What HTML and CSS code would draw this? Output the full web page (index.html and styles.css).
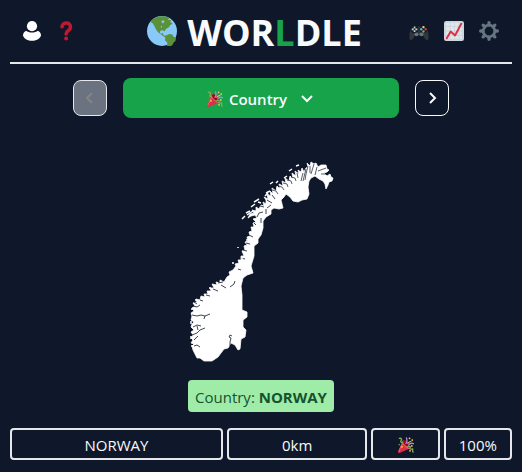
FILE: index.html
```
<!DOCTYPE html>
<html lang="en">
<head>
<meta charset="utf-8">
<meta name="viewport" content="width=device-width, initial-scale=1">
<title>Worldle</title>
<link rel="stylesheet" href="styles.css">
</head>
<body>
<svg class="defs" aria-hidden="true">
  <symbol id="party" viewBox="0 0 36 36">
    <path fill="#dd2e44" d="M11.6 7.6c-.2.2-.3.4-.4.6L.1 33.200c-.4 1 0 1.900.7 2.500.6.6 1.500.7 2.500.3L27.900 25.400c1.500-2.500-.6-7.500-5.200-12.200S13.300 6 11.600 7.600z"/>
    <path fill="#ea596e" d="M13 12 3 33l-2.500-1L11 9zM11 8c2 7 9 15 17 17l-5 2C15 23 10 16 9 12z"/>
    <ellipse cx="20" cy="16" rx="11" ry="4.500" fill="#a0041e" transform="rotate(45 20 16)"/>
    <path fill="none" stroke="#aa8dd8" stroke-width="3" stroke-linecap="round" d="M18 14c4-4 2-8 1-12M24 18c2-3 6-5 11-3"/>
    <path fill="none" stroke="#77b255" stroke-width="3" stroke-linecap="round" d="M3 3c5-1 6 2 4 5s0 4 3 4M21 22c4-2 8-1 6 2s2 4 5 3-1 5 2 7"/>
    <path fill="none" stroke="#fdcb58" stroke-width="2.500" stroke-linecap="round" d="M22 14c2-2 3-4 7-4"/>
    <g fill="#fdcb58"><circle cx="26" cy="3" r="2"/><circle cx="32" cy="7" r="2"/><circle cx="31" cy="20" r="2"/><circle cx="9" cy="22" r="2"/><circle cx="27" cy="31" r="2"/></g>
    <circle cx="3" cy="17" r="2" fill="#5c913b"/>
  </symbol>
</svg>
<div class="app">
  <header class="header">
    <div class="tools tools-start">
      <button class="icon-button" aria-label="Account">
        <svg viewBox="0 0 20 20"><circle cx="10" cy="5.200" r="5.100" fill="#fff"/><path fill="#fff" d="M4 9.800c3 2.400 9 2.400 12 0 2 1 3 2.700 3 4.700-2 7-16 7-18 0 0-2 1-3.700 3-4.700z"/></svg>
      </button>
      <button class="icon-button" aria-label="How to play">
        <svg viewBox="0 0 20 20"><path fill="none" stroke="#be1931" stroke-width="3.600" stroke-linecap="round" d="M5 5.800C5.500.8 13.500.6 13.500 6c0 4.200-4.400 3.400-4.400 7"/><circle cx="9.100" cy="17.600" r="2" fill="#be1931"/></svg>
      </button>
    </div>
    <h1 class="title">
      <svg class="globe" viewBox="0 0 36 36" aria-hidden="true"><circle cx="18" cy="18" r="18" fill="#88c9f9"/><path fill="#5c913b" d="M4 7C9 1 16-.6 23 .8l4 1.700-2 2 4 .7-1 2 3 2-3 1.500-2 3-3 1.500-2 3-2.500-1-2.500.5-.5 3 2 .5 1.500-1 .5 2.500 2 1 2-.5 3-1.500 4 .5 1 2.500 3.500 1.500-1 4-2 1.500-1.500 3-4.500 3.500-2.500 1 .5-4 .5-3-3-3 .5-3.500-3-2-3-2-3-2.500-2.500-3.500-1.500-3.500L7 9z"/><path fill="#88c9f9" d="m17 6 3-1 1 2-2 2zm-1 7 2-1 0 2z"/></svg>
      <span class="wordmark">WOR<span class="accent">L</span>DLE</span>
    </h1>
    <div class="tools">
      <button class="icon-button" aria-label="Other games">
        <svg viewBox="0 0 36 36"><path fill="#31373d" d="M1 33C0 25 2 14 6 10c3-2 7-2 9 0h6c2-2 6-2 9 0 4 4 6 15 5 23-2 3-6 1-8-4l-2-3H11l-2 3c-2 5-6 7-8 4z"/><circle cx="10" cy="15" r="7" fill="#14191d"/><circle cx="26" cy="15" r="7" fill="#14191d"/><g fill="#66757f"><circle cx="13.500" cy="24" r="3.500"/><circle cx="22.500" cy="24" r="3.500"/></g><path fill="#ccd6dd" d="M8.500 10h3v3.500H15v3h-3.500V20h-3v-3.500H5v-3h3.500z"/><circle cx="10" cy="15" r="2" fill="#292f33"/><circle cx="26" cy="11" r="2.200" fill="#ffcc4d"/><circle cx="22" cy="15" r="2.200" fill="#55acee"/><circle cx="30" cy="15" r="2.200" fill="#dd2e44"/><circle cx="26" cy="19" r="2.200" fill="#77b255"/></svg>
      </button>
      <button class="icon-button" aria-label="Statistics">
        <svg viewBox="0 0 36 36"><rect width="36" height="36" rx="4" fill="#ccd6dd"/><path fill="#e1e8ed" d="M4 3h6v6H4zm8 0h6v6h-6zm8 0h6v6h-6zm8 0h4v6h-4zM4 11h6v6H4zm8 0h6v6h-6zm8 0h6v6h-6zm8 0h4v6h-4zM4 19h6v6H4zm8 0h6v6h-6zm8 0h6v6h-6zm8 0h4v6h-4zM4 27h6v5H4zm8 0h6v5h-6zm8 0h6v5h-6zm8 0h4v5h-4z"/><path fill="none" stroke="#dd2e44" stroke-width="3.500" stroke-linecap="round" stroke-linejoin="round" d="m5 31 7-12 8 7L31 5"/></svg>
      </button>
      <button class="icon-button" aria-label="Settings">
        <svg viewBox="0 0 36 36"><g stroke="#66757f" stroke-width="6" stroke-linecap="round"><path d="M18 3v4M18 29v4M3 18h4M29 18h4M7.500 7.500l3 3M25.500 25.500l3 3M7.500 28.500l3-3M25.500 10.500l3-3"/></g><circle cx="18" cy="18" r="10.500" fill="none" stroke="#66757f" stroke-width="5"/></svg>
      </button>
    </div>
  </header>

  <main class="main">
    <nav class="rounds" aria-label="Rounds">
      <button class="step" aria-label="Previous round" disabled><svg viewBox="0 0 16 16"><path d="M10 3 5 8l5 5"/></svg></button>
      <button class="round"><svg class="party" aria-hidden="true"><use href="#party"/></svg><span>Country</span><svg class="chevron" viewBox="0 0 16 16" aria-hidden="true"><path d="m3 5 5 5 5-5"/></svg></button>
      <button class="step" aria-label="Next round"><svg viewBox="0 0 16 16"><path d="m6 3 5 5-5 5"/></svg></button>
    </nav>

    <svg class="map" viewBox="161 161 200 202" role="img" aria-label="Outline of Norway">
      <path fill="#fff" stroke="#fff" stroke-width=".8" stroke-linejoin="round" d="M193 350L192 346 194 344 191 343 193 340 191 338 193 335 191 332 194 330 191 327 192 324 194 322 191 320 192 316 191 313 194 311 192 308 195 306 193 303 197 302 196 299 200 300 201 296 205 297 204 294 208 294 207 291 211 291 210 288 214 288 212 284 217 285 216 282 220 283 220 280 224 282 227 277 230 275 229 272 233 270 236 266 235 264 239 263 238 260 241 260 241 256 244 256 242 251 245 250 244 246 247 245 245 242 248 241 247 237 250 236 249 232 252 231 251 227 254 227 253 223 256 222 253 219 257 218 255 215 251 216 248 218 250 214 254 213 252 210 256 211 256 207 259 209 261 205 264 206 263 202 266 204 266 200 264 197 268 199 267 194 271 196 270 191 273 194 272 188 276 191 277 186 280 189 279 184 283 186 282 181 286 183 285 178 289 181 290 176 293 179 292 173 296 176 295 171 299 174 298 170 301 172 302 168 304 172 306 168 308 167 307 163 310 166 311 162 314 164 316 163 318 167 321 165 326 165 327 169 329 170 327 172 324 173 327 176 330 174 331 177 333 178 332 181 329 182 328 185 326 189 325 184 323 181 319 179 315 176 311 178 309 181 308 187 309 194 307 199 302 200 298 202 293 201 290 197 286 194 284 197 281 200 283 208 279 209 274 208 271 210 271 214 266 217 263 221 263 228 261 235 258 239 258 243 254 246 254 256 251 266 253 273 247 275 243 278 241 286 242 295 242 310 247 312 247 317 243 320 243 327 246 330 245 337 241 339 240 349 238 350 235 345 231 343 228 348 224 349 218 357 212 361 204 361 200 358 197 358Z"/>
      <path fill="none" stroke="#0f172a" stroke-width=".8" d="M192 315l5 1 4-1 4 1 5-2m-5 2-1 3M193 306l4 1 3-2m-7 22 4-2 4 1M192 335l5-2 3-3 5-2m-11 12 4-4m-4 10 3-1 3 2m-2-17-1-4m-3-24 3 2m3-4 3 1m27 45 0-4 1-4-2-1 1-2 2 1M206 295l4 1m3-7 5 2m3-6 5 3m4-1 4-3 1-3m-17 2 5-1m15-13 3 1m0-12 4 1m-2-9 4 1m-1-8 4 1m-1-9 4 2M256 225l-2-2m7 0 0-5m-4-1 2-4 4-1m3 2 0-5m-6-3 4 1m3 1 4-3m-4-5 5 3m0-8 3 4"/>
      <path fill="none" stroke="#0f172a" stroke-width=".7" d="M272 190l4 1 2 3m0-8 4 1 2 3m-1-7 4 1 1 3m-1-7 4 1 1 3m-1-7 4 1 1 3m1-8 1 5M303 173l-2 8m5-12-3 12M308 166l-2 8-1 6m5-14v7M311 174l3-10m3 3-2 8M318 171l8-3m-5 6 5 0"/>
      <path fill="none" stroke="#fff" stroke-width="1.500" d="M242 219l3-3m2-1 6-4m-7 2 4-2m1-4 4-3m-1-2 5-3m-1 3 3 1m4-7 3-3m-2 0 4-2m0-7 3-2m3 1 2-2m6-3 3-2m2-5 3-2m4-3 3-1M232 263h2m4-16v1m3 10h2m4-17v-2M191 321v3m0 12v3m1 6v2M192 308v2m3-10h2m12-12h2"/>
    </svg>

    <p class="answer">Country: <strong>NORWAY</strong></p>

    <div class="guess">
      <div class="cell cell-name">NORWAY</div>
      <div class="cell cell-distance">0km</div>
      <div class="cell"><svg class="party" role="img" aria-label="Correct"><use href="#party"/></svg></div>
      <div class="cell">100%</div>
    </div>
  </main>
</div>
</body>
</html>
```
FILE: styles.css
```
* {
  box-sizing: border-box;
}

body {
  margin: 0;
  background: #0f172a;
  color: #f8fafc;
  font: 15px/24px "Open Sans", "Noto Sans", sans-serif;
}

button {
  padding: 0;
  border: 0;
  background: none;
  color: inherit;
  font: inherit;
  cursor: pointer;
}

svg {
  display: block;
}

.defs {
  position: absolute;
  width: 0;
  height: 0;
}

.app {
  padding: 0 10px;
}

.header {
  display: flex;
  align-items: center;
  justify-content: space-between;
  height: 64px;
  padding: 0 12px;
  border-bottom: 2px solid #e5e7eb;
}

.tools {
  display: flex;
  gap: 14px;
}

.tools-start {
  min-width: 78px;
}

.icon-button {
  width: 21px;
}

.icon-button svg {
  width: 20px;
  height: 20px;
}

.title {
  display: flex;
  align-items: center;
  gap: 10px;
  margin: 0;
  font-size: 36px;
  line-height: 40px;
  font-weight: 700;
}

.wordmark {
  padding-top: 4px;
}

.globe {
  width: 30px;
  height: 30px;
}

.accent {
  color: #16a34a;
}

.main {
  display: flex;
  flex-direction: column;
  align-items: center;
  padding-top: 14px;
}

.rounds {
  display: flex;
  align-items: center;
  justify-content: center;
  gap: 16px;
  width: 100%;
}

.step {
  display: grid;
  place-items: center;
  width: 34px;
  height: 36px;
  border: 1px solid #f8fafc;
  border-radius: 8px;
}

.step:disabled {
  background: #6b7280;
  border-color: #e5e7eb;
  color: #858585;
}

.step svg,
.chevron {
  width: 16px;
  height: 16px;
  fill: none;
  stroke: currentColor;
  stroke-width: 2;
}

.round {
  display: flex;
  align-items: center;
  justify-content: center;
  gap: 6px;
  width: 55%;
  height: 40px;
  padding-top: 2px;
  border-radius: 8px;
  background: #16a34a;
  font-weight: 600;
}

.party {
  width: 16px;
  height: 16px;
}

.chevron {
  margin-left: 6px;
}

.map {
  width: 200px;
  height: 202px;
  margin-top: 43px;
}

.answer {
  margin: 17px 0 16px;
  padding: 5px 7px 3px;
  border-radius: 4px;
  background: #9eeca8;
  color: #14532d;
}

.answer strong {
  font-weight: 700;
}

.guess {
  display: grid;
  grid-template-columns: repeat(7, 1fr);
  gap: 4px;
  width: 100%;
}

.cell {
  display: flex;
  align-items: center;
  justify-content: center;
  height: 32px;
  padding-top: 2px;
  border: 2px solid #e5e7eb;
  border-radius: 4px;
}

.cell-name {
  grid-column: span 3;
}

.cell-distance {
  grid-column: span 2;
}
```
